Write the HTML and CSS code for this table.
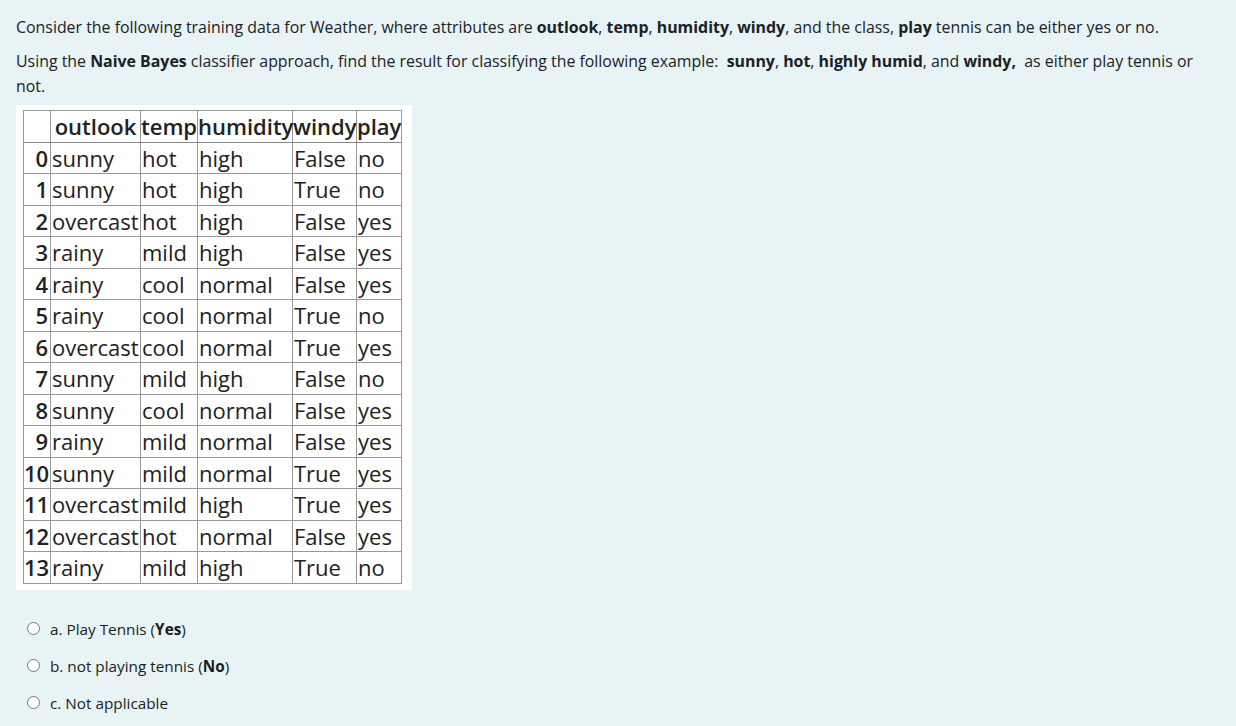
FILE: index.html
```html
<!DOCTYPE html>
<html lang="en">

<head>
    <meta charset="UTF-8">
    <title>Naive Bayes question</title>
    <link rel="stylesheet" href="styles.css">
</head>

<body>
    <div class="question">
        <p>Consider the following training data for Weather, where attributes are <b>outlook</b>, <b>temp</b>, <b>humidity</b>, <b>windy</b>, and the class, <b>play</b> tennis can be either yes or no.</p>
        <p class="last">Using the <b>Naive Bayes</b> classifier approach, find the result for classifying the following example:&nbsp; <b>sunny</b>, <b>hot</b>, <b>highly humid</b>, and <b>windy,</b>&nbsp; as either play tennis or not.</p>

        <!-- Training data -->
        <div class="data-box">
            <table class="data">
                <colgroup>
                    <col class="c-idx">
                    <col class="c-outlook">
                    <col class="c-temp">
                    <col class="c-humidity">
                    <col class="c-windy">
                    <col class="c-play">
                </colgroup>
                <thead>
                    <tr>
                        <th></th>
                        <th>outlook</th>
                        <th>temp</th>
                        <th>humidity</th>
                        <th>windy</th>
                        <th>play</th>
                    </tr>
                </thead>
                <tbody>
                    <tr><th>0</th><td>sunny</td><td>hot</td><td>high</td><td>False</td><td>no</td></tr>
                    <tr><th>1</th><td>sunny</td><td>hot</td><td>high</td><td>True</td><td>no</td></tr>
                    <tr><th>2</th><td>overcast</td><td>hot</td><td>high</td><td>False</td><td>yes</td></tr>
                    <tr><th>3</th><td>rainy</td><td>mild</td><td>high</td><td>False</td><td>yes</td></tr>
                    <tr><th>4</th><td>rainy</td><td>cool</td><td>normal</td><td>False</td><td>yes</td></tr>
                    <tr><th>5</th><td>rainy</td><td>cool</td><td>normal</td><td>True</td><td>no</td></tr>
                    <tr><th>6</th><td>overcast</td><td>cool</td><td>normal</td><td>True</td><td>yes</td></tr>
                    <tr><th>7</th><td>sunny</td><td>mild</td><td>high</td><td>False</td><td>no</td></tr>
                    <tr><th>8</th><td>sunny</td><td>cool</td><td>normal</td><td>False</td><td>yes</td></tr>
                    <tr><th>9</th><td>rainy</td><td>mild</td><td>normal</td><td>False</td><td>yes</td></tr>
                    <tr><th>10</th><td>sunny</td><td>mild</td><td>normal</td><td>True</td><td>yes</td></tr>
                    <tr><th>11</th><td>overcast</td><td>mild</td><td>high</td><td>True</td><td>yes</td></tr>
                    <tr><th>12</th><td>overcast</td><td>hot</td><td>normal</td><td>False</td><td>yes</td></tr>
                    <tr><th>13</th><td>rainy</td><td>mild</td><td>high</td><td>True</td><td>no</td></tr>
                </tbody>
            </table>
        </div>

        <!-- Answers -->
        <div class="answers">
            <label class="answer"><span class="radio"></span>a. Play Tennis (<b>Yes</b>)</label>
            <label class="answer"><span class="radio"></span>b. not playing tennis (<b>No</b>)</label>
            <label class="answer"><span class="radio"></span>c. Not applicable</label>
        </div>
    </div>
</body>

</html>
```

FILE: styles.css
```css
body {
    margin: 0;
    padding: 0;
    background-color: #e7f3f5;
    color: #1d2125;
    font-family: "Open Sans", "Noto Sans", sans-serif;
    font-size: 15.9px;
}

.question {
    padding: 15px 16px 0 16px;
}

p {
    margin: 0 0 9px 0;
    line-height: 25px;
}

p.last {
    margin-bottom: 6px;
}

b {
    font-weight: bold;
}

.data-box {
    display: inline-block;
    background-color: #fff;
    padding: 5px 10px 6px 7px;
}

.data {
    width: 378px;
    border-collapse: collapse;
    table-layout: fixed;
    border: 1px solid #555;
    font-family: "Open Sans", sans-serif;
    font-size: 22px;
    color: #222;
}

.c-idx { width: 27px; }
.c-outlook { width: 90px; }
.c-temp { width: 57px; }
.c-humidity { width: 95px; }
.c-windy { width: 64px; }
.c-play { width: 45px; }

.data th,
.data td {
    border: 1px solid #999;
    padding: 0 1px;
    height: 30.5px;
    line-height: 30px;
    white-space: nowrap;
    overflow: visible;
}

.data td {
    text-align: left;
    font-weight: normal;
}

.data thead th {
    font-weight: 600;
    text-align: center;
    padding: 0;
    border-bottom-color: #888;
}

.data tbody th {
    font-weight: 600;
    text-align: right;
    padding: 0 2px 0 0;
}

.answers {
    display: flex;
    flex-direction: column;
    gap: 15px;
    margin-top: 23px;
    padding-left: 11px;
}

.answer {
    display: flex;
    align-items: center;
    height: 22px;
    font-size: 15.3px;
    color: #1a1d21;
}

.radio {
    width: 11px;
    height: 11px;
    border: 1px solid #777;
    border-radius: 50%;
    background-color: #fff;
    margin-right: 10px;
}
```
